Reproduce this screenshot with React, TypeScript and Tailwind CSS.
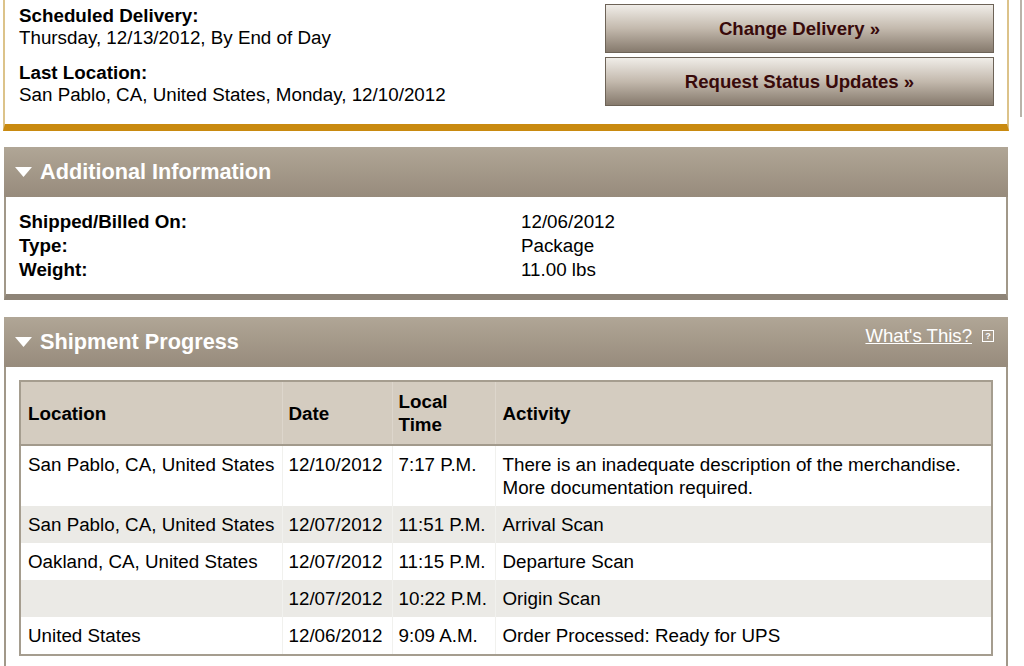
import React from 'react';

const rows = [
  { loc: 'San Pablo, CA, United States', date: '12/10/2012', time: '7:17 P.M.', act: 'There is an inadequate description of the merchandise. More documentation required.' },
  { loc: 'San Pablo, CA, United States', date: '12/07/2012', time: '11:51 P.M.', act: 'Arrival Scan' },
  { loc: 'Oakland, CA, United States', date: '12/07/2012', time: '11:15 P.M.', act: 'Departure Scan' },
  { loc: '', date: '12/07/2012', time: '10:22 P.M.', act: 'Origin Scan' },
  { loc: 'United States', date: '12/06/2012', time: '9:09 A.M.', act: 'Order Processed: Ready for UPS' },
];

const Triangle = () => (
  <svg width="17" height="10" viewBox="0 0 17 10" className="shrink-0">
    <polygon points="0,0 17,0 8.5,10" fill="#ffffff" />
  </svg>
);

const SectionHeader: React.FC<{ title: string; right?: React.ReactNode }> = ({ title, right }) => (
  <div className="h-[50px] flex items-center justify-between pl-[11px] pr-[14px] bg-gradient-to-b from-[#b0a696] to-[#978b7c]">
    <div className="flex items-center gap-[8px]">
      <Triangle />
      <span className="text-white font-bold text-[21.7px]">{title}</span>
    </div>
    {right}
  </div>
);

const ActionButton: React.FC<{ label: string }> = ({ label }) => (
  <button
    type="button"
    className="w-[389px] h-[49px] border border-[#6d6357] bg-gradient-to-b from-[#f0ede8] via-[#c3b9ad] to-[#867a6d] text-[#380a0a] font-bold text-[18.6px]"
  >
    {label}
  </button>
);

export default function App() {
  return (
    <div className="w-[1024px] h-[666px] overflow-hidden bg-white text-black text-[18.8px] leading-[22px] font-['Liberation_Sans',Arial,sans-serif]">
      <div className="flex">
        <div className="ml-[3px] w-[1006px]">
          {/* delivery summary */}
          <div className="h-[131px] border-x-2 border-[#dcc38a] border-b-[7px] border-b-[#c98a10] flex justify-between pl-[14px] pr-[13px]">
            <div className="pt-[5px]">
              <div className="font-bold">Scheduled Delivery:</div>
              <div>Thursday, 12/13/2012, By End of Day</div>
              <div className="font-bold mt-[13px]">Last Location:</div>
              <div>San Pablo, CA, United States, Monday, 12/10/2012</div>
            </div>
            <div className="pt-[4px] flex flex-col gap-[4px]">
              <ActionButton label="Change Delivery »" />
              <ActionButton label="Request Status Updates »" />
            </div>
          </div>

          {/* additional information */}
          <div className="mt-[16px] ml-[1px] w-[1004px]">
            <SectionHeader title="Additional Information" />
            <div className="border-x-2 border-[#a19889] border-b-[6px] border-b-[#8e8477] pt-[13px] pb-[12px] pl-[13px] leading-[24px]">
              {[
                ['Shipped/Billed On:', '12/06/2012'],
                ['Type:', 'Package'],
                ['Weight:', '11.00 lbs'],
              ].map(([k, v]) => (
                <div key={k} className="flex">
                  <div className="w-[502px] font-bold">{k}</div>
                  <div>{v}</div>
                </div>
              ))}
            </div>
          </div>

          {/* shipment progress */}
          <div className="mt-[17px] ml-[1px] w-[1004px]">
            <SectionHeader
              title="Shipment Progress"
              right={
                <div className="flex items-center gap-[10px] -mt-[12px]">
                  <span className="text-white underline text-[18.6px]">What's This?</span>
                  <span className="w-[12px] h-[12px] border border-white bg-[#a69b8c] text-white text-[9px] leading-[10px] font-bold flex items-center justify-center">?</span>
                </div>
              }
            />
            <div className="border-x-2 border-[#a19889] pt-[13px] pl-[13px] pr-[14px] pb-[10px]">
              <table className="w-[974px] border-collapse border-2 border-[#a59d8f] table-fixed leading-[23px]">
                <colgroup>
                  <col className="w-[262px]" />
                  <col className="w-[110px]" />
                  <col className="w-[103px]" />
                  <col />
                </colgroup>
                <thead>
                  <tr className="bg-[#d4ccc0] border-b-2 border-[#a29a8c]">
                    <th className="text-left font-bold pl-[7px] pr-[2px] py-[8px] h-[63px] border-r border-[#ddd6cc]">Location</th>
                    <th className="text-left font-bold pl-[6px] pr-[2px] py-[8px] border-r border-[#ddd6cc]">Date</th>
                    <th className="text-left font-bold pl-[6px] pr-[2px] py-[8px] border-r border-[#ddd6cc]">Local<br />Time</th>
                    <th className="text-left font-bold pl-[7px] pr-[4px] py-[8px]">Activity</th>
                  </tr>
                </thead>
                <tbody>
                  {rows.map((r, i) => (
                    <tr key={i} className={i % 2 === 1 ? 'bg-[#ebeae6]' : 'bg-white'}>
                      <td className="align-top pl-[7px] pr-[2px] py-[7px] border-r border-[#f1f1ee] whitespace-nowrap">{r.loc}</td>
                      <td className="align-top pl-[6px] pr-[2px] py-[7px] border-r border-[#f1f1ee]">{r.date}</td>
                      <td className="align-top pl-[6px] pr-[2px] py-[7px] border-r border-[#f1f1ee] whitespace-nowrap">{r.time}</td>
                      <td className="align-top pl-[7px] pr-[30px] py-[7px]">{r.act}</td>
                    </tr>
                  ))}
                </tbody>
              </table>
            </div>
          </div>
        </div>
        <div className="ml-[11px] h-[117px] border-l-2 border-[#b9b3a9]" />
      </div>
    </div>
  );
}
